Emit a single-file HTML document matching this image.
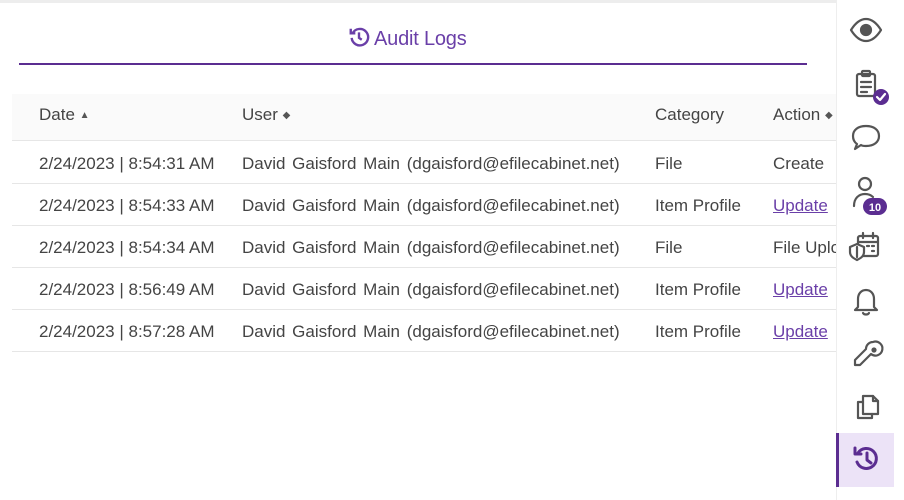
<!DOCTYPE html><html><head><style>
body{margin:0;width:904px;height:500px;background:#fff;font-family:"Liberation Sans",sans-serif;color:#444;position:relative;overflow:hidden}
.top{position:absolute;left:0;top:0;width:836px;height:3px;background:#ededed}
.title{position:absolute;left:348px;top:26px;font-size:20px;color:#6a3fa8;letter-spacing:-0.2px}
.title svg{vertical-align:-3px;margin-right:4px}
.uline{position:absolute;left:19px;top:63px;width:788px;height:2px;background:#5b2d91}
.hdr{position:absolute;left:12px;top:94px;width:824px;height:46px;background:#fafafa;border-bottom:1px solid #e6e6e6}
.t{position:absolute;font-size:17px;white-space:nowrap;letter-spacing:0}
.u{word-spacing:2px}
.row{position:absolute;left:12px;width:824px;height:41px;border-bottom:1px solid #e6e6e6}
a{color:#6a3fa8;text-decoration:underline}
.side{position:absolute;left:836px;top:0;width:68px;height:500px;background:#fff;border-left:1px solid #eee}
.act{position:absolute;left:836px;top:433px;width:55px;height:54px;background:#ece3f7;border-left:3px solid #5b2d91}
.s{font-size:10px;color:#555;vertical-align:2px}
</style></head><body>
<div class="top"></div>
<div class="title"><svg width="22" height="22" viewBox="0 0 24 24" fill="none" stroke="#6a3fa8" stroke-width="2.6"><path d="M5 8a9 9 0 1 1-1 5"/><path d="M3 3v5h5" /><path d="M12 7v6l3 2"/></svg>Audit Logs</div>
<div class="uline"></div>
<div class="hdr"></div>
<div class="t" style="left:39px;top:105px">Date <span class="s">▲</span></div>
<div class="t" style="left:242px;top:105px">User <span class="s">◆</span></div>
<div class="t" style="left:655px;top:105px">Category</div>
<div class="t" style="left:773px;top:105px">Action <span class="s">◆</span></div>

<div class="row" style="top:142px"></div>
<div class="row" style="top:184px"></div>
<div class="row" style="top:226px"></div>
<div class="row" style="top:268px"></div>
<div class="row" style="top:310px"></div>

<div class="t" style="left:39px;top:154px">2/24/2023 | 8:54:31 AM</div><div class="t u" style="left:242px;top:154px">David Gaisford Main (dgaisford@efilecabinet.net)</div><div class="t" style="left:655px;top:154px">File</div><div class="t" style="left:773px;top:154px">Create</div>
<div class="t" style="left:39px;top:196px">2/24/2023 | 8:54:33 AM</div><div class="t u" style="left:242px;top:196px">David Gaisford Main (dgaisford@efilecabinet.net)</div><div class="t" style="left:655px;top:196px">Item Profile</div><div class="t" style="left:773px;top:196px"><a>Update</a></div>
<div class="t" style="left:39px;top:238px">2/24/2023 | 8:54:34 AM</div><div class="t u" style="left:242px;top:238px">David Gaisford Main (dgaisford@efilecabinet.net)</div><div class="t" style="left:655px;top:238px">File</div><div class="t" style="left:773px;top:238px">File Uplo</div>
<div class="t" style="left:39px;top:280px">2/24/2023 | 8:56:49 AM</div><div class="t u" style="left:242px;top:280px">David Gaisford Main (dgaisford@efilecabinet.net)</div><div class="t" style="left:655px;top:280px">Item Profile</div><div class="t" style="left:773px;top:280px"><a>Update</a></div>
<div class="t" style="left:39px;top:322px">2/24/2023 | 8:57:28 AM</div><div class="t u" style="left:242px;top:322px">David Gaisford Main (dgaisford@efilecabinet.net)</div><div class="t" style="left:655px;top:322px">Item Profile</div><div class="t" style="left:773px;top:322px"><a>Update</a></div>

<div class="side"></div>
<div class="act"></div>
<svg style="position:absolute;left:836px;top:0" width="68" height="500" fill="none" stroke="#555" stroke-width="2.2" stroke-linecap="round" stroke-linejoin="round">
<path d="M15 30c5-8 10-11 15-11s10 3 15 11c-5 8-10 11-15 11s-10-3-15-11z"/><circle cx="30" cy="30" r="5" fill="#555"/>
<rect x="21" y="74" width="18" height="22" rx="2"/><rect x="26" y="71" width="8" height="5" rx="1"/><path d="M25 82h10M25 87h10M25 92h6"/>
<circle cx="45" cy="97" r="8" fill="#5b2d91" stroke="none"/><path d="M41 97l3 3 5-6" stroke="#fff"/>
<path d="M30 126c8 0 13 4 13 10s-5 10-13 10c-2 0-4 0-5-1l-6 4 2-5c-3-2-4-5-4-8 0-6 5-10 13-10z"/>
<circle cx="29" cy="184" r="6"/><path d="M18 206c0-8 5-12 11-12 4 0 6 1 8 3"/>
<rect x="27" y="198" width="24" height="17" rx="8.5" fill="#5b2d91" stroke="none"/>
<text x="39" y="211" fill="#fff" stroke="none" font-size="11" font-weight="bold" font-family="Liberation Sans" text-anchor="middle">10</text>
<rect x="22" y="236" width="20" height="20" rx="2"/><path d="M22 242h20M27 233v5M37 233v5"/><path d="M31 246h2M36 246h2M36 251h2"/>
<path d="M21 244l7 3v5c0 4-3 6-7 8-4-2-7-4-7-8v-5z" fill="#fff"/><path d="M21 247v10" />
<path d="M22 307v-8c0-5 3-9 8-9s8 4 8 9v8l3 3H19z"/><path d="M27 313c1 2 5 2 6 0"/>
<path d="M37 342a7 7 0 1 1-2 12l-11 11h-5v-5l11-11a7 7 0 0 1 7-7z"/><circle cx="38" cy="350" r="1.5" fill="#555"/>
<path d="M27 396h10l5 5v13H27z"/><path d="M37 396v5h5"/><path d="M27 402h-5v16h14v-4"/>
<g stroke="#5b2d91" stroke-width="3"><path d="M22 453a10 10 0 1 1-1 9"/><path d="M19 448v6h6"/><path d="M31 453v7l4 3"/></g>
</svg>
</body></html>
